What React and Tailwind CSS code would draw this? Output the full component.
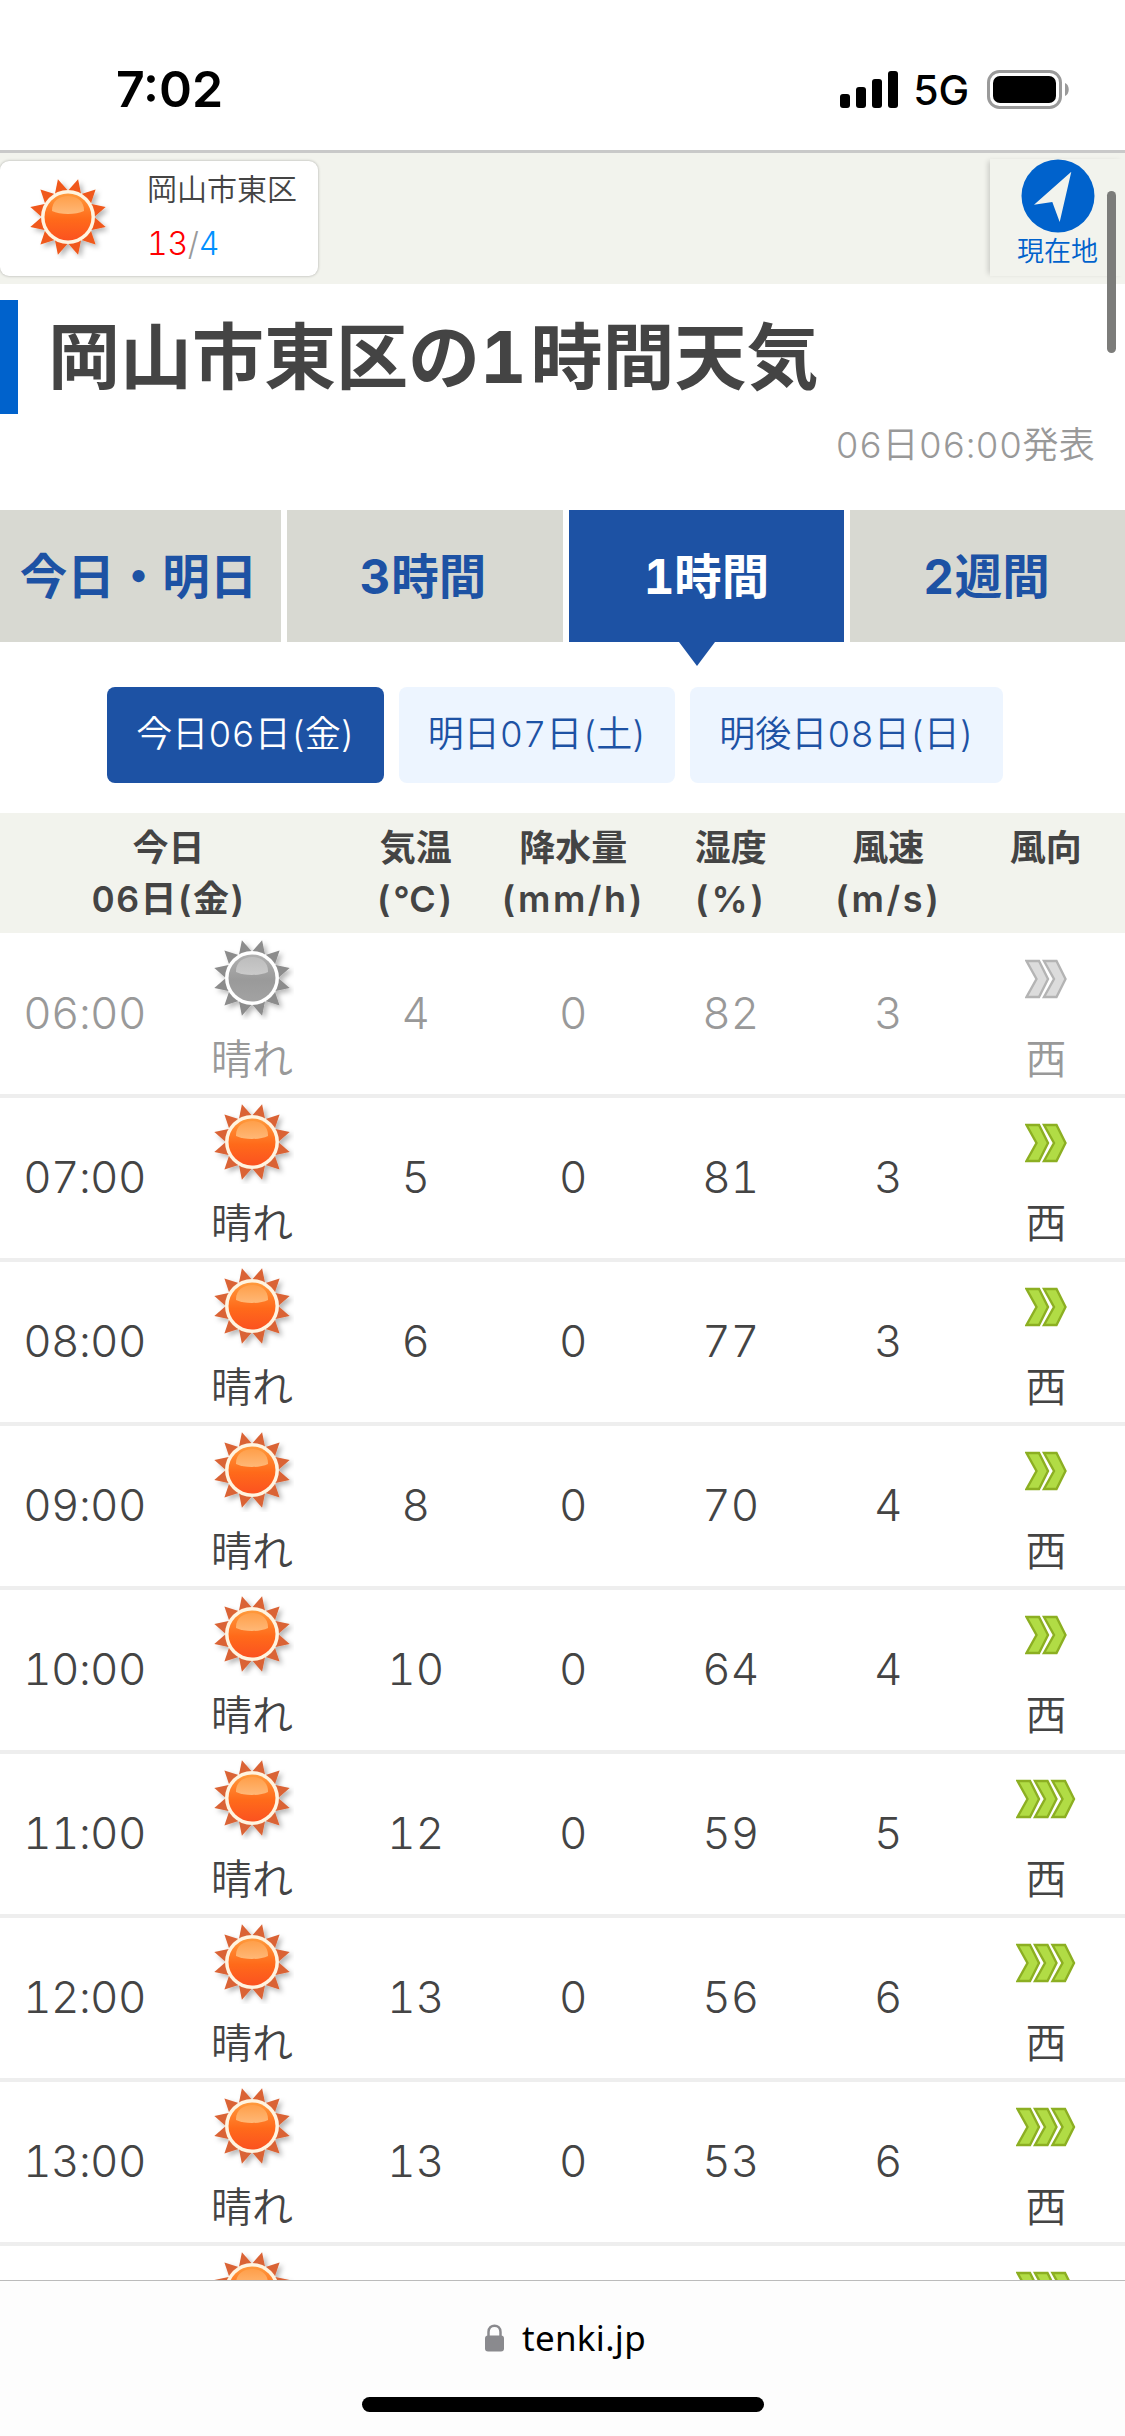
import React from 'react';

const hours = [
  { id: 6, time: '06:00', temp: '4', rain: '0', humidity: '82', wind: '3', level: 2, past: true },
  { id: 7, time: '07:00', temp: '5', rain: '0', humidity: '81', wind: '3', level: 2 },
  { id: 8, time: '08:00', temp: '6', rain: '0', humidity: '77', wind: '3', level: 2 },
  { id: 9, time: '09:00', temp: '8', rain: '0', humidity: '70', wind: '4', level: 2 },
  { id: 10, time: '10:00', temp: '10', rain: '0', humidity: '64', wind: '4', level: 2 },
  { id: 11, time: '11:00', temp: '12', rain: '0', humidity: '59', wind: '5', level: 3 },
  { id: 12, time: '12:00', temp: '13', rain: '0', humidity: '56', wind: '6', level: 3 },
  { id: 13, time: '13:00', temp: '13', rain: '0', humidity: '53', wind: '6', level: 3 },
];

const columns = [
  ['気温', '(℃)'],
  ['降水量', '(mm/h)'],
  ['湿度', '(%)'],
  ['風速', '(m/s)'],
  ['風向', ''],
];

const rays = [0, 1, 2, 3, 4, 5, 6, 7, 8, 9, 10, 11];

function Sun({ id, gray, ray = '#da6436', className }) {
  return (
    <svg viewBox="-42 -42 84 84" className={className}>
      <defs>
        <linearGradient id={`${id}-body`} x1="0" y1="0" x2="0" y2="1">
          <stop offset="0" stopColor={gray ? '#b0b0b0' : '#ff9a3c'} />
          <stop offset="0.55" stopColor={gray ? '#9a9a9a' : '#ff6a1a'} />
          <stop offset="1" stopColor={gray ? '#a2a2a2' : '#fb5220'} />
        </linearGradient>
        <linearGradient id={`${id}-shine`} x1="0" y1="0" x2="0" y2="1">
          <stop offset="0" stopColor={gray ? '#bdbdbd' : '#ff9f4a'} />
          <stop offset="1" stopColor={gray ? '#cacaca' : '#ffb877'} />
        </linearGradient>
        <filter id={`${id}-shadow`} x="-20%" y="-20%" width="150%" height="150%">
          <feDropShadow dx="3" dy="3" stdDeviation="2.5" floodColor="#000" floodOpacity="0.28" />
        </filter>
      </defs>
      <g filter={`url(#${id}-shadow)`}>
        {rays.map((i) => (
          <path key={i} d="M-7 -25 L0 -39 L7 -25 Z" fill={gray ? '#8c8c8c' : ray} transform={`rotate(${i * 30 + 15})`} />
        ))}
        <circle r="27" fill={gray ? '#ffffff' : '#fff4e0'} />
      </g>
      <circle r="23.5" fill={`url(#${id}-body)`} />
      <path d="M-16 -6 C-17 -26 17 -26 16 -6 C8 -2 -8 -2 -16 -6 Z" fill={`url(#${id}-shine)`} />
    </svg>
  );
}

function WindArrows({ level, gray }) {
  const width = level * 17.5 + 8;
  return (
    <svg width={width} height="40" viewBox={`0 0 ${width} 40`}>
      {Array.from({ length: level }).map((_, i) => (
        <path
          key={i}
          d="M2 2 H14.5 L23.5 20 L14.5 38 H2 L12 20 Z"
          transform={`translate(${i * 17.5 - 0.5} 0)`}
          fill={gray ? '#dcdcdc' : '#b1dc45'}
          stroke={gray ? '#b4b4b4' : '#8caf22'}
          strokeWidth="2.4"
        />
      ))}
    </svg>
  );
}

function StatusBar() {
  return (
    <div className="h-[150px] shrink-0 flex items-start justify-between pl-[116px] pr-[54px] pt-[64px] text-black">
      <div className="text-[50px] leading-[50px] font-semibold [font-variant-numeric:normal]">7:02</div>
      <div className="flex items-center h-[50px]">
        <svg width="58" height="37" viewBox="0 0 58 37">
          <rect x="0" y="23" width="10" height="14" rx="3" />
          <rect x="16" y="16" width="10" height="21" rx="3" />
          <rect x="32" y="8" width="10" height="29" rx="3" />
          <rect x="48" y="0" width="10" height="37" rx="3" />
        </svg>
        <span className="w-[89px] pr-1 text-center text-[41px] leading-[54px] font-medium tracking-[-1px] pt-[2px]">5G</span>
        <svg width="84" height="39" viewBox="0 0 84 39">
          <rect x="1.5" y="1.5" width="72" height="36" rx="11" fill="none" stroke="#9a9a9a" strokeWidth="3" />
          <rect x="6" y="6" width="63" height="27" rx="7" />
          <path d="M78 13 C83 15 83 24 78 26 Z" fill="#9a9a9a" />
        </svg>
      </div>
    </div>
  );
}

function Header() {
  return (
    <div className="h-[134px] shrink-0 border-t-[3px] border-[#c9c9c9] bg-[#f2f3ed] flex items-start justify-between">
      <div className="mt-2 w-[318px] h-[115px] bg-white rounded-[9px] shadow-[0_0_3px_rgba(0,0,0,0.3)] flex">
        <Sun id="head" ray="#f0581a" className="w-[84px] h-[84px] ml-[26px] mt-[14px]" />
        <div className="ml-[37px] pt-[8px]">
          <div className="text-[30px] leading-[41px] text-[#444]">岡山市東区</div>
          <div className="mt-[12px] text-[32px] leading-[44px] tracking-[-0.3px] text-[#999]">
            <span className="text-[#f00]">13</span>/<span className="text-[#0090ff]">4</span>
          </div>
        </div>
      </div>
      <div className="mt-[6px] w-[135px] h-[117px] flex flex-col items-center shadow-[-4px_0_5px_-2px_rgba(0,0,0,0.16)]">
        <svg width="74" height="74" viewBox="0 0 74 74" className="ml-px">
          <circle cx="37" cy="37" r="36.5" fill="#0062cc" />
          <path d="M50.3 12.7 L13 45.7 L31.3 43 L38.7 63 Z" fill="#f2f3ed" />
        </svg>
        <div className="mt-[2px] text-[27px] leading-[34px] text-[#0062cc]">現在地</div>
      </div>
    </div>
  );
}

function Tabs() {
  return (
    <div className="flex shrink-0 gap-[6px] h-[132px] text-[47.5px] leading-[133px] font-bold text-center text-[#1d52a4]">
      <div className="w-[281px] bg-[#d8d9d2] pr-1">今日・明日</div>
      <div className="w-[276px] bg-[#d8d9d2] pr-1"><span className="tracking-[1px]">3</span>時間</div>
      <div className="w-[275px] bg-[#1d52a4] text-white relative">
        1時間
        <svg className="absolute top-[132px] left-[110px]" width="36" height="24" viewBox="0 0 36 24">
          <path d="M0 0 H36 L18 24 Z" fill="#1d52a4" />
        </svg>
      </div>
      <div className="w-[275px] bg-[#d8d9d2] pr-[2px]"><span className="tracking-[1px]">2</span>週間</div>
    </div>
  );
}

function DayButtons() {
  return (
    <div className="mt-[45px] ml-[107px] shrink-0 flex gap-[15px] h-24 text-[36px] leading-[94px] text-center text-[#1d52a4]">
      <div className="w-[277px] rounded-lg bg-[#1d52a4] text-white">今日06日(金)</div>
      <div className="w-[276px] rounded-lg bg-[#edf5ff]">明日07日(土)</div>
      <div className="w-[313px] rounded-lg bg-[#edf5ff]">明後日08日(日)</div>
    </div>
  );
}

function HourRow({ hour }) {
  return (
    <div
      className={`h-[164px] shrink-0 flex border-b-4 border-[#eee] text-[44px] ${hour.past ? 'text-[#999]' : 'text-[#444]'}`}
    >
      <div className="w-[169px] pt-[49px] leading-[60px] text-center tracking-[-0.6px]">{hour.time}</div>
      <div className="w-[168px] pr-[2px] flex flex-col items-center">
        <Sun id={`sun${hour.id}`} gray={hour.past} className="w-[84px] h-[84px] mt-[2px]" />
        <div className="mt-[9px] text-[41px] leading-[60px]">晴れ</div>
      </div>
      {[hour.temp, hour.rain, hour.humidity, hour.wind].map((value, i) => (
        <div key={i} className="w-[157.5px] pt-[49px] leading-[60px] text-center">{value}</div>
      ))}
      <div className="w-[158px] flex flex-col items-center pt-[25px]">
        <WindArrows level={hour.level} gray={hour.past} />
        <div className="mt-[30px] text-[41px] leading-[60px]">西</div>
      </div>
    </div>
  );
}

export default function App() {
  return (
    <div className="relative w-[1125px] h-[2436px] overflow-hidden bg-white text-[#444] font-[350] tabular-nums flex flex-col font-['Inter','Noto_Sans_CJK_JP',sans-serif]">
      <StatusBar />
      <Header />
      <div className="mt-4 h-[114px] shrink-0 border-l-[18px] border-[#0062cc] pl-[30px]">
        <h1 className="text-[72px] leading-[114px] font-bold">
          岡山市東区の<span className="tracking-[4px]">1</span>時間天気
        </h1>
      </div>
      <div className="h-[96px] shrink-0 pr-[30px] pt-[4px] text-right text-[36px] leading-[55px] tracking-[0.2px] text-[#999]">
        06日06:00発表
      </div>
      <Tabs />
      <DayButtons />

      <div className="mt-[30px] h-[120px] shrink-0 flex bg-[#f2f3ed] text-[36px] leading-[51px] pt-[10px] font-semibold text-center">
        <div className="w-[337px]">
          <div>今日</div>
          <div className="tracking-[1.2px]">06日(金)</div>
        </div>
        {columns.map(([name, unit]) => (
          <div key={name} className="w-[157.5px] whitespace-nowrap">
            <div>{name}</div>
            <div className="tracking-[2.5px]">{unit}</div>
          </div>
        ))}
      </div>
      <div className="h-[1347px] pt-px shrink-0 overflow-hidden">
        {hours.map((hour) => (
          <HourRow key={hour.id} hour={hour} />
        ))}
        {/* next row, only its icons peek out above the browser bar */}
        <div className="h-[164px] flex">
          <div className="w-[168px] ml-[169px] pr-[2px] flex justify-center">
            <Sun id="sun14" className="w-[84px] h-[84px] mt-[2px]" />
          </div>
          <div className="w-[158px] ml-[630px] flex justify-center pt-[25px]">
            <WindArrows level={3} />
          </div>
        </div>
      </div>

      <div className="h-[156px] shrink-0 border-t border-[#bbb] bg-[#fdfdfd] flex flex-col items-center">
        <div className="mt-[32px] ml-[6px] flex items-center text-[35px] leading-[50px] text-black font-normal">
          <svg width="19" height="28" viewBox="0 0 19 28" className="mr-[18px]">
            <path d="M3.5 13 V8 C3.5 -0.5 15.5 -0.5 15.5 8 V13" fill="none" stroke="#8a8a8e" strokeWidth="2.5" />
            <rect x="0" y="11.5" width="19" height="16" rx="3" fill="#8a8a8e" />
          </svg>
          <span className="font-['Noto_Sans',sans-serif] tracking-[0.3px]">tenki.jp</span>
        </div>
        <div className="mt-[34px] w-[402px] h-[15px] rounded-full bg-black"></div>
      </div>

      {/* scroll indicator */}
      <div className="absolute top-[191px] right-[9px] w-[9px] h-[162px] rounded-full bg-[#7c7c7a]"></div>
    </div>
  );
}
